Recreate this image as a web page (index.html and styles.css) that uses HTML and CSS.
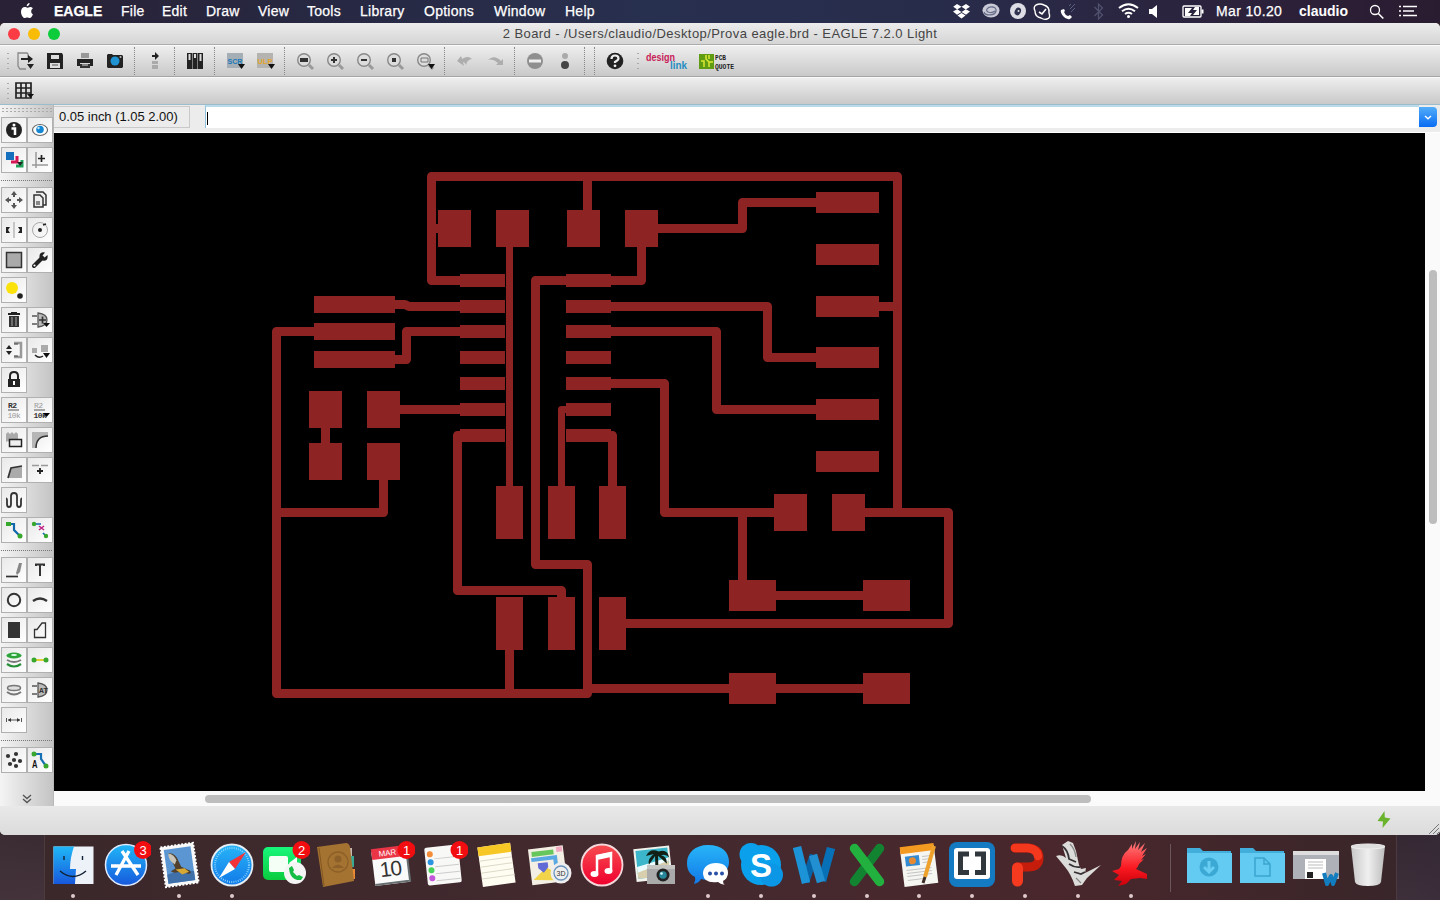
FILE: index.html
```html
<!DOCTYPE html>
<html lang="en">
<head>
<meta charset="utf-8">
<title>2 Board - EAGLE 7.2.0 Light</title>
<link rel="stylesheet" href="styles.css">
</head>
<body>
<div class="desktop">
<header class="menubar">
  <nav class="menus">
    <span class="apple"><svg width="16" height="18" viewBox="0 0 16 18"><path fill="#fff" d="M10.600 1c.1 1.900-1.300 3.300-2.900 3.300C7.500 2.700 9 1.200 10.600 1zM13.900 12.400c-.8 1.900-1.900 3.600-3.200 3.600-1 0-1.300-.6-2.500-.6s-1.600.6-2.500.6C3.900 16 2 12.700 2 9.700c0-3 1.800-4.700 3.700-4.700 1.100 0 1.900.7 2.600.7.700 0 1.600-.8 3-.8 1.100 0 2 .6 2.600 1.400-2.400 1.500-2 5.100 0 6.100z"/></svg></span>
    <b>EAGLE</b><span>File</span><span>Edit</span><span>Draw</span><span>View</span><span>Tools</span><span>Library</span><span>Options</span><span>Window</span><span>Help</span>
  </nav>
  <svg class="tray" width="270" height="23" viewBox="940 0 270 23">
    <g fill="#fff"><path d="M957 4l4.500 2.800-4.300 2.700-4-2.700zM966 4l4 2.800-4.300 2.700-4.200-2.700zM953 11.500l4.200-2.300 4.300 2.900-4.500 2.700zM970 11.500l-4.200-2.300-4.300 2.900 4.500 2.700zM957.500 15.500l4-2.500 4 2.500-4 3z"/></g>
    <ellipse cx="991" cy="10.500" rx="8.500" ry="7" fill="#c9cad6"/><path d="M984 12c1 4 11 4 12-1s-7-5-9-2 4 5 8 2" fill="none" stroke="#6a6f8c" stroke-width="1.300"/>
    <circle cx="1018" cy="11" r="8" fill="#dcdde5"/><ellipse cx="1018" cy="11.500" rx="3" ry="4" fill="#30334f" transform="rotate(25 1018 11)"/><circle cx="1018.500" cy="11" r="1" fill="#ddd"/>
    <path d="M1036 5q4-2 8 0 6 2 5 8 2 5-2 6-3 1-6-1-6-1-6-7-2-4 1-6z" fill="none" stroke="#fff" stroke-width="1.400"/><path d="M1039 12l3 2 4-5" fill="none" stroke="#fff" stroke-width="1.600"/>
    <path d="M1061 10l3-1 1 2-1 1q1 3 4 4l2-1 2 2-2 2q-4 1-7-3t-2-6z" fill="#fff"/><path d="M1070 9l5-5m0 4l-4 4m-2-6l2-2" stroke="#596080" stroke-width="1"/>
    <path d="M1094.500 7l8 8-4 4V4l4 4-8 8" fill="none" stroke="#50516c" stroke-width="1.300"/>
    <g fill="none" stroke="#fff" stroke-width="2"><path d="M1119 8q9.500-7.500 19 0M1122 11.200q6.500-5 13 0M1125 14q3.500-2.500 7 0"/></g><circle cx="1128.500" cy="16.500" r="1.500" fill="#fff"/>
    <path d="M1149 9h3l5-4v13l-5-4h-3z" fill="#fff"/>
    <rect x="1183" y="6" width="18" height="11" rx="1" fill="none" stroke="#fff" stroke-width="1.300"/><path d="M1202.500 9.500v4" stroke="#fff" stroke-width="2"/><path d="M1185 8h7l-4 5h4l-2 3h-5zM1199 15h-6l4-5h-4l2-3h4z" fill="#fff"/>
  </svg>
  <span class="clock">Mar 10.20</span><b class="user">claudio</b>
  <svg class="tray-end" width="55" height="23" viewBox="1365 0 55 23" fill="none" stroke="#fff"><circle cx="1375" cy="10" r="4.500" stroke-width="1.300"/><path d="M1378.300 13.500l5 5" stroke-width="1.600"/><path d="M1403 6.500h14M1403 11h11M1403 15.500h14M1399 6.500h2M1399 11h2M1399 15.500h2" stroke-width="1.700"/></svg>
</header>

<main class="window">
  <div class="titlebar">
    <div class="lights"><i class="red"></i><i class="amber"></i><i class="green"></i></div>
    <h1>2 Board - /Users/claudio/Desktop/Prova eagle.brd - EAGLE 7.2.0 Light</h1>
  </div>

  <div class="toolbar main-tools">
    <i class="grip"></i>
    <svg class="tool first" viewBox="-13 -15 28 30"><path d="M3-2v-5l-1-1h-9v13l2 3h6" fill="none" stroke="#888" stroke-width="1.300"/><path d="M-4-2h8" stroke="#222" stroke-width="2"/><path d="M3-6l5 4-5 4zM2 3h7l-3.500 5z" fill="#222"/></svg>
    <svg class="tool" viewBox="-15 -15 30 30"><path d="M-8-8H7l1 2V8H-8z" fill="#222"/><path d="M-4-6h8v4h-8zM-5 2H5v5H-5z" fill="#dcdcdc"/><path d="M-3 4h6" stroke="#555"/></svg>
    <svg class="tool" viewBox="-15 -15 30 30"><path d="M-4-8h8v5h-8z" fill="#999"/><path d="M-8-2H8v7H5V2H-5v3h-3z" fill="#222"/><path d="M-5 3H5v4H-5z" fill="#333"/><path d="M-3 4h6" stroke="#ddd"/></svg>
    <svg class="tool" viewBox="-15 -15 30 30"><path d="M-7-7h4l1 1h9l1 1V6L7 7H-7L-8 6V-6z" fill="#222"/><circle r="4.500" fill="#1f93d2"/><circle cx="5.500" cy="-4" r="1" fill="#bbb"/></svg>
    <i class="sep"></i>
    <svg class="tool" viewBox="-15 -15 30 30"><path d="M-3-6h3v-3l4 4-4 4v-3h-3z" fill="#222"/><path d="M-3 0h6v3h-6zM-3 4h6v4h-6z" fill="#aaa"/></svg>
    <i class="sep"></i>
    <svg class="tool" viewBox="-15 -15 30 30"><path d="M-8-8h5V8h-5zM-2.500-8h5V8h-5zM3-8h5V8H3z" fill="#222"/><path d="M-6.500-7h2v6h-2zM-1-7h2v4h-2zM4.500-7h2v7h-2z" fill="#ddd"/></svg>
    <i class="sep"></i>
    <svg class="tool" viewBox="-15 -15 30 30"><path d="M-8-8H8V7H-8z" fill="#a5aeb5"/><text x="-7.500" y="3" textLength="15" lengthAdjust="spacingAndGlyphs" class="tiny" fill="#1a78b8">SCR</text><path d="M3 3h7L6.500 8z" fill="#111"/></svg>
    <svg class="tool" viewBox="-15 -15 30 30"><path d="M-8-8H8V7H-8z" fill="#b5b3af"/><text x="-7.500" y="3" textLength="15" lengthAdjust="spacingAndGlyphs" class="tiny" fill="#e3a526">ULP</text><path d="M3 3h7L6.500 8z" fill="#111"/></svg>
    <i class="sep"></i>
    <svg class="tool" viewBox="-15 -15 30 30"><circle cx="-1" cy="-1" r="6.300" class="lens"/><path d="M4 4l4 4" class="handle"/><path d="M-5-3h8v4h-8z" fill="#333"/></svg>
    <svg class="tool" viewBox="-15 -15 30 30"><circle cx="-1" cy="-1" r="6.300" class="lens"/><path d="M4 4l4 4" class="handle"/><path d="M-4-1h6M-1-4v6" stroke="#333" stroke-width="2"/></svg>
    <svg class="tool" viewBox="-15 -15 30 30"><circle cx="-1" cy="-1" r="6.300" class="lens"/><path d="M4 4l4 4" class="handle"/><path d="M-4-1h6" stroke="#333" stroke-width="2"/></svg>
    <svg class="tool" viewBox="-15 -15 30 30"><circle cx="-1" cy="-1" r="6.300" class="lens"/><path d="M4 4l4 4" class="handle"/><path d="M-3-3h4v4h-4z" fill="#333"/></svg>
    <svg class="tool" viewBox="-15 -15 30 30"><circle cx="-1" cy="-1" r="6.300" class="lens"/><path d="M4 4l4 4" class="handle"/><path d="M-4-3h7v4h-7z" fill="none" stroke="#777"/><path d="M3 3h7L6.500 8z" fill="#111"/></svg>
    <i class="sep"></i>
    <svg class="tool" viewBox="-15 -15 30 30"><path d="M-8 0l4-5 1 3Q3-6 7-2 4-2 2 1L1 4Q0 1-2 1l1 4z" fill="#adadad"/></svg>
    <svg class="tool" viewBox="-15 -15 30 30"><path d="M8 4V-2L6 0Q-1-7-7-1-2-3 3 2L1 4z" fill="#adadad"/></svg>
    <i class="sep"></i>
    <svg class="tool" viewBox="-15 -15 30 30"><circle r="8" fill="#8f8f8f"/><path d="M-6-1.500H6v3H-6z" fill="#eee"/></svg>
    <svg class="tool" viewBox="-15 -15 30 30"><circle cy="-5" r="3" fill="#aaa"/><circle cy="4" r="4" fill="#444"/></svg>
    <i class="sep"></i><i class="sep"></i>
    <svg class="tool" viewBox="-15 -15 30 30"><circle r="8.300" fill="#222"/><path d="M-3.500-2q0-3.500 3.500-3.500T3.500-2.500Q3.500-1 0 1v1" fill="none" stroke="#eee" stroke-width="2.200"/><circle cy="4.800" r="1.400" fill="#eee"/></svg>
    <i class="grip"></i>
    <svg class="brand" width="52" height="30" viewBox="642 46 52 30"><text x="646" y="61" textLength="29" lengthAdjust="spacingAndGlyphs" class="dl" fill="#c92058">design</text><text x="670" y="69" textLength="17" lengthAdjust="spacingAndGlyphs" class="dl" fill="#268cc1">link</text></svg>
    <svg class="brand" width="46" height="30" viewBox="694 46 46 30"><path d="M699 54h15v15h-15z" fill="#5f9b13"/><path d="M701 61h3v6m2-12v4l3 3v5m0-12v4m0 3h4" stroke="#dce936" stroke-width="1.500" fill="none"/><text x="715" y="60" textLength="11" lengthAdjust="spacingAndGlyphs" class="pcb">PCB</text><text x="715" y="69" textLength="19" lengthAdjust="spacingAndGlyphs" class="pcb">QUOTE</text></svg>
  </div>

  <div class="toolbar grid-tools">
    <i class="grip"></i>
    <svg class="tool first" viewBox="-13 -14 28 28"><path d="M-9-8H6V7H-9zM-4-8V7M1-8V7M-9-3H6M-9 2H6" fill="none" stroke="#222" stroke-width="1.700"/><path d="M2 3h7L5.500 7z" fill="#111"/></svg>
  </div>

  <div class="work">
    <aside class="palette">
      <i class="dots"></i>
      <div class="row"><svg viewBox="0 0 24 24"><circle cx="12" cy="12" r="8" fill="#222"/><path d="M9.500 10.500H13V17" stroke="#fff" stroke-width="2.500" fill="none"/><circle cx="12" cy="7" r="1.500" fill="#fff"/></svg><svg viewBox="0 0 24 24"><ellipse cx="12" cy="12" rx="7.500" ry="5.500" fill="#fff" stroke="#666" stroke-width="1.200"/><circle cx="12" cy="11.500" r="3.800" fill="#1688d3"/><circle cx="10.500" cy="10" r="1.200" fill="#bce4fc"/></svg></div>
      <div class="row"><svg viewBox="0 0 24 24"><path d="M4 4h8v8H4z" fill="#1670bd"/><path d="M15 8v6H9" fill="none" stroke="#d71755" stroke-width="3"/><path d="M20 12v6h-6" fill="none" stroke="#20a15a" stroke-width="3"/><path d="M15 14h6l-3 4z" fill="#222"/></svg><svg viewBox="0 0 24 24"><path d="M8 4v16M4 17h16" stroke="#999" stroke-width="1.500"/><path d="M10 10.500h7M13.500 7v7" stroke="#222" stroke-width="1.700"/></svg></div>
      <i class="rule"></i>
      <div class="row"><svg viewBox="0 0 24 24"><path d="M12 3l3 4h-2v2h-2V7H9zM12 21l3-4h-2v-2h-2v2H9zM3 12l4-3v2h2v2H7v2zM21 12l-4-3v2h-2v2h2v2z" fill="#555"/></svg><svg viewBox="0 0 24 24"><path d="M8 4h7l3 3v10h-3M6 7h6l3 3v9H6z" fill="#eee" stroke="#333" stroke-width="1.500"/><path d="M8 13h4v4H8z" fill="#888"/></svg></div>
      <div class="row"><svg viewBox="0 0 24 24"><path d="M12 4v16" stroke="#999"/><path d="M4 9h4l-2 3 2 3H4zM20 9h-4l2 3-2 3h4z" fill="#222"/></svg><svg viewBox="0 0 24 24"><circle cx="12" cy="12" r="7.500" fill="none" stroke="#aaa"/><circle cx="12" cy="12" r="2" fill="#222"/><path d="M15 7l3-1" stroke="#222" stroke-width="1.500"/></svg></div>
      <div class="row"><svg viewBox="0 0 24 24"><path d="M4.500 4.500h15v15h-15z" fill="#aaa" stroke="#333" stroke-width="1.500"/></svg><svg viewBox="0 0 24 24"><path d="M6 18l8-8" stroke="#222" stroke-width="4" stroke-linecap="round"/><path d="M19.500 7l-3 2.500-2-2L17 4.500q-6-1-5.500 5l3 3q6 1 5-5.500z" fill="#222"/><circle cx="6.500" cy="17.500" r="1.100" fill="#fff"/></svg></div>
      <div class="row"><svg viewBox="0 0 24 24"><circle cx="10" cy="10" r="6" fill="#fbe20b"/><circle cx="18" cy="18" r="2.800" fill="#222"/></svg></div>
      <div class="row"><svg viewBox="0 0 24 24"><path d="M6 6h12M9 5h6" stroke="#222" stroke-width="2"/><path d="M7 8h10v11H7z" fill="#333"/><path d="M10 9v9m4-9v9" stroke="#aaa"/></svg><svg viewBox="0 0 24 24"><path d="M4 8h5m-5 8h5M10 5q9 1 9 7t-9 7z" fill="#bbb" stroke="#555" stroke-width="1.300"/><path d="M11 12h7m-3.500-3.500v7" stroke="#333" stroke-width="1.700"/><path d="M15 15h7l-3.500 4z" fill="#111"/></svg></div>
      <div class="row"><svg viewBox="0 0 24 24"><path d="M4 11l3-4 3 4zM4 13l3 4 3-4z" fill="#222"/><path d="M12 5h7v14h-7" fill="none" stroke="#999" stroke-width="2.500"/><path d="M12 6h4m-4 12h4" stroke="#444"/></svg><svg viewBox="0 0 24 24"><path d="M4 10h5v5H4zM13 7h7v7h-7z" fill="#aaa"/><path d="M7 17q4 4 8 1" stroke="#222" fill="none" stroke-width="1.500"/><path d="M15 15h7l-3.500 5z" fill="#111"/></svg></div>
      <div class="row"><svg viewBox="0 0 24 24"><path d="M6 11h12v8H6z" fill="#222"/><path d="M8 12V8q0-4 4-4t4 4v4" fill="none" stroke="#222" stroke-width="2"/><path d="M12 13v4" stroke="#fff" stroke-width="2"/></svg></div>
      <div class="row"><svg viewBox="0 0 24 24"><text x="6" y="9.500" class="nano">R2</text><path d="M6 12h11" stroke="#555"/><text x="5.500" y="19.500" class="nano pale">10k</text></svg><svg viewBox="0 0 24 24"><text x="6" y="9.500" class="nano pale">R2</text><path d="M6 12h11" stroke="#555"/><text x="5.500" y="19.500" class="nano">10k</text><path d="M15 15h7l-3.500 4z"/></svg></div>
      <div class="row"><svg viewBox="0 0 24 24"><path d="M4 6l2-2 2 2 2-2 2 2 2-2 2 2v8l-2-1-2 2-2-2-2 2-2-2-2 1z" fill="#aaa"/><path d="M7.500 11.500h12v7h-12z" fill="#eee" stroke="#222" stroke-width="1.500"/></svg><svg viewBox="0 0 24 24"><path d="M4 4h16v4Q8 8 8 20H4z" fill="#b6b6b6"/><path d="M8 20q0-12 12-12" fill="none" stroke="#333" stroke-width="1.500"/></svg></div>
      <div class="row"><svg viewBox="0 0 24 24"><path d="M9 10l11-2v12H6z" fill="#aaa"/><path d="M6 20L9 10l11-2" fill="none" stroke="#333" stroke-width="1.700"/></svg><svg viewBox="0 0 24 24"><path d="M4 7.500h7m2 0h7" stroke="#999" stroke-width="1.300"/><path d="M9 13h6m-3-3v6" stroke="#222" stroke-width="1.800"/></svg></div>
      <div class="row"><svg viewBox="0 0 24 24"><path d="M4 10.500q1 0 1 2v3.500q0 3 2 3t2-3V8q0-3 3-3t3 3v8q0 3 2 3t2-3v-3.500q0-2 1-2" fill="none" stroke="#333" stroke-width="1.800"/></svg></div>
      <div class="row"><svg viewBox="0 0 24 24"><path d="M6 6h6v6l6 6" fill="none" stroke="#1268aa" stroke-width="2.200"/><path d="M4 4h5v4H4z" fill="#37a72e"/><circle cx="18" cy="18" r="2.500" fill="#37a72e"/></svg><svg viewBox="0 0 24 24"><path d="M6 6h7M15 15l3 3" stroke="#1268aa" stroke-width="1.700"/><path d="M11 8l5 4m0-4l-5 4" stroke="#c02585" stroke-width="1.500"/><circle cx="6" cy="6" r="2.200" fill="#37a72e"/><circle cx="18" cy="18" r="2.200" fill="#37a72e"/></svg></div>
      <i class="rule"></i>
      <div class="row"><svg viewBox="0 0 24 24"><path d="M4 18.500h12" stroke="#333" stroke-width="1.700"/><path d="M17 5h3l-2 9-3 3-1-2z" fill="#888"/></svg><svg viewBox="0 0 24 24"><path d="M8 8V6.500h8V8M12 6.500V18" stroke="#333" stroke-width="2" fill="none"/></svg></div>
      <div class="row"><svg viewBox="0 0 24 24"><circle cx="12" cy="12" r="6.200" fill="none" stroke="#333" stroke-width="2"/></svg><svg viewBox="0 0 24 24"><path d="M5 13q7-5 14 0" fill="none" stroke="#333" stroke-width="2.300"/></svg></div>
      <div class="row"><svg viewBox="0 0 24 24"><path d="M6 4h12v16H6z" fill="#333"/></svg><svg viewBox="0 0 24 24"><path d="M6.500 19.500v-8h2.500l5-6.500h3.500v14.500z" fill="none" stroke="#333" stroke-width="1.300"/></svg></div>
      <div class="row"><svg viewBox="0 0 24 24"><path d="M5 16q7 5 14 0" fill="none" stroke="#278f38" stroke-width="2.200"/><path d="M5 12q7 4 14 0" fill="none" stroke="#777" stroke-width="2"/><ellipse cx="12" cy="7.500" rx="7.500" ry="3" fill="#2ca43a"/><ellipse cx="12" cy="7" rx="3" ry="1" fill="#dfe"/></svg><svg viewBox="0 0 24 24"><path d="M6 12h12" stroke="#e1cf36" stroke-width="2"/><circle cx="6" cy="12" r="2.500" fill="#37a72e"/><circle cx="18" cy="12" r="2.500" fill="#37a72e"/></svg></div>
      <div class="row"><svg viewBox="0 0 24 24"><ellipse cx="12" cy="10" rx="6.500" ry="2.500" fill="#ddd" stroke="#777" stroke-width="1.500"/><path d="M5 14q7 5 14 0" fill="none" stroke="#777" stroke-width="2"/></svg><svg viewBox="0 0 24 24"><path d="M4 8h5m-5 8h5M10 5q9 1 9 7t-9 7z" fill="#bbb" stroke="#555" stroke-width="1.300"/><text x="11" y="15" class="nano">AT</text></svg></div>
      <div class="row"><svg viewBox="0 0 24 24"><path d="M4.500 10v4m15-4v4M6 12h12" stroke="#555"/><path d="M6 12l3-2v4zM18 12l-3-2v4z" fill="#333"/></svg></div>
      <i class="rule"></i>
      <div class="row"><svg viewBox="0 0 24 24" fill="#333"><circle cx="12" cy="12" r="2.100"/><circle cx="6" cy="8" r="2.100"/><circle cx="14" cy="6" r="2.100"/><circle cx="18" cy="13" r="2.100"/><circle cx="8" cy="16" r="2.100"/><circle cx="14" cy="18" r="2.100"/></svg><svg viewBox="0 0 24 24"><path d="M6 6h7v5l5 7" fill="none" stroke="#1670b4" stroke-width="2.200"/><circle cx="6" cy="6" r="2.500" fill="#37a72e"/><circle cx="18" cy="18" r="2.500" fill="#37a72e"/><text x="4" y="20" textLength="5.500" lengthAdjust="spacingAndGlyphs" class="auto">A</text></svg></div>
      <svg class="more" width="10" height="12" viewBox="0 0 10 12"><path d="M1 1l4 3.500L9 1M1 5l4 3.500L9 5" fill="none" stroke="#555" stroke-width="1.400"/></svg>
    </aside>

    <section class="editor">
      <div class="command">
        <span class="coords">0.05 inch (1.05 2.00)</span>
        <div class="input"><i class="caret"></i></div>
        <div class="dropdown"><svg width="8" height="5" viewBox="0 0 8 5"><path d="M1 1l3 2.700L7 1" fill="none" stroke="#fff" stroke-width="1.400"/></svg></div>
      </div>
      <div class="view">
        <svg class="board" viewBox="54 133 1371 658">
          <g class="trace">
            <path d="M460 280.500H431.500V176.500H897.500V512.500M431.500 228.500H440M587.500 176.500V212"/>
            <path d="M656 228.500H742.500V202.500H818M877 306.500H897.500"/>
            <path d="M393 304.500H405L409 306.500H462M393 359.500H406.500V331.500H462M398 409.500H462"/>
            <path d="M316 331.500H276.500V693.500H587.500V564.500H535.500V280.500H641.500V245M383.500 478V512.500H276.500M325.500 426V445"/>
            <path d="M462 435.500H457.500V590.500H561.500V600M609 435.500H612.500V488M509.500 648V693"/>
            <path d="M609 306.500H767.500V357.500H818M609 331.500H716.500V409.500H818M609 383.500H664.500V512.500H776M742.500 512.500V582"/>
            <path d="M863 512.500H948.500V623.500H624M774 595.500H865M590 688.500H865"/>
          </g>
          <path class="trace thin" d="M509.500 245V488M568 409.500H561.500V488"/>
          <g class="pads">
            <path d="M438 210h33v37h-33zM496 210h33v37h-33zM567 210h33v37h-33zM625 210h33v37h-33z"/>
            <path d="M460 274h45v13h-45zM460 300h45v13h-45zM460 325h45v13h-45zM460 351h45v13h-45zM460 377h45v13h-45zM460 403h45v13h-45zM460 429h45v13h-45z"/>
            <path d="M566 274h45v13h-45zM566 300h45v13h-45zM566 325h45v13h-45zM566 351h45v13h-45zM566 377h45v13h-45zM566 403h45v13h-45zM566 429h45v13h-45z"/>
            <path d="M314 296h81v17h-81zM314 323h81v17h-81zM314 351h81v17h-81z"/>
            <path d="M309 391h33v37h-33zM367 391h33v37h-33zM309 443h33v37h-33zM367 443h33v37h-33zM774 494h33v37h-33zM832 494h33v37h-33z"/>
            <path d="M496 486h27v53h-27zM548 486h27v53h-27zM599 486h27v53h-27zM496 597h27v53h-27zM548 597h27v53h-27zM599 597h27v53h-27z"/>
            <path d="M816 192h63v21h-63zM816 244h63v21h-63zM816 296h63v21h-63zM816 347h63v21h-63zM816 399h63v21h-63zM816 451h63v21h-63z"/>
            <path d="M729 580h47v31h-47zM863 580h47v31h-47zM729 673h47v31h-47zM863 673h47v31h-47z"/>
          </g>
        </svg>
        <div class="vscroll"><i></i></div>
      </div>
      <div class="hscroll"><i></i></div>
    </section>
  </div>
  <footer class="status">
    <svg width="14" height="17" viewBox="0 0 14 17"><path d="M7.500 0L.5 10l5.500.5-.5 6.500L13.500 7.500 7.800 6.500z" fill="#69b32d"/></svg>
    <svg width="12" height="12" viewBox="0 0 12 12"><path d="M1 11L11 1M5 11l6-6M9 11l2-2" stroke="#777"/></svg>
  </footer>
</main>

<div class="shelf">
 <svg width="0" height="0" class="defs"><defs>
  <linearGradient id="blue" x2="0" y2="1"><stop stop-color="#20b8f8"/><stop offset="1" stop-color="#1758dc"/></linearGradient>
  <linearGradient id="sky" x2="0" y2="1"><stop stop-color="#28b5f8"/><stop offset="1" stop-color="#1179e8"/></linearGradient>
  <linearGradient id="lime" x2="0" y2="1"><stop stop-color="#17f77b"/><stop offset="1" stop-color="#0bcb3f"/></linearGradient>
  <linearGradient id="rose" x2="0" y2="1"><stop stop-color="#f64d50"/><stop offset="1" stop-color="#f0002e"/></linearGradient>
  <linearGradient id="bird" x2="0" y2="1"><stop stop-color="#ff8080"/><stop offset=".6" stop-color="#fa1820"/><stop offset="1" stop-color="#c9000a"/></linearGradient>
  <linearGradient id="bin" x2="1" y2="0"><stop stop-color="#c8c8c8"/><stop offset=".5" stop-color="#efefef"/><stop offset="1" stop-color="#bdbdbd"/></linearGradient>
 </defs></svg>
 <div class="dock">
  <svg class="app" viewBox="-25 -30 50 65"><path d="M-19.500-18.500h40v37.500h-40z" fill="#edf2f8"/><path d="M-19.500-18.500H1Q-3-7-3 4H3l-1 15h-21.500z" fill="url(#blue)"/><path d="M-9-9v4M9.500-9v4M-13 6Q0 17 13 6" stroke="#102135" stroke-width="1.400" fill="none"/><circle class="run" cy="31" r="2"/></svg>
  <svg class="app" viewBox="-25 -30 50 65"><circle r="20.500" fill="url(#blue)" stroke="#dfeaff" stroke-width="1.500"/><path d="M3-14l-13 24M-4-14L12 10M-15 1h30" stroke="#fff" stroke-width="3.300"/><circle cx="17" cy="-15" r="9" class="badge"/><text x="17" y="-10.500" class="num">3</text></svg>
  <svg class="app" viewBox="-25 -30 50 65"><g transform="rotate(-8)"><path d="M-16-20h33v40h-33z" fill="#f8f8f8" stroke="#fff" stroke-width="2" stroke-dasharray="2 1.500"/><path d="M-13-17h27v34h-27z" fill="#5b96d3"/><path d="M-13 8q14-4 27 0v9h-27z" fill="#3f70aa"/><path d="M-9-13q7 0 9 9l2 6 8 5q2 4-2 3L1 7l-7 0-3-2 5-2z" fill="#51412d"/><path d="M-9-13q6 2 7 8l-2 4q-6-5-5-12z" fill="#c9c4b8"/><path d="M-4 4l9 0 4 4-7 2z" fill="#d7a834"/></g><circle class="run" cy="31" r="2"/></svg>
  <svg class="app" viewBox="-25 -30 50 65"><circle r="20.500" fill="url(#sky)" stroke="#e6edf3" stroke-width="1.800"/><circle r="17" fill="none" stroke="#9adbff" stroke-width="2" stroke-dasharray=".8 1.400"/><path d="M14-13L3 4-3-3z" fill="#f23439"/><path d="M-13 13L3 4-3-3z" fill="#fff"/><circle class="run" cy="31" r="2"/></svg>
  <svg class="app" viewBox="-25 -30 50 65"><rect x="-22" y="-18" width="38" height="33" rx="5" fill="url(#lime)"/><rect x="-16" y="-9" width="19" height="16" rx="2" fill="#f4fff5"/><path d="M4-2l8-6V6z" fill="#fff"/><circle cx="10" cy="8" r="11" fill="#f5f5f5"/><path d="M4 3l3-2 2 4-1 2 4 4 2-1 4 2-2 3q-11 1-12-12z" fill="#15bd45"/><circle cx="16.500" cy="-15" r="9" class="badge"/><text x="16.500" y="-10.500" class="num">2</text></svg>
  <svg class="app" viewBox="-25 -30 50 65"><path d="M10-17h5V13h-5z" fill="#c6bab0"/><path d="M14-9h3v11h-3z" fill="#37a994"/><path d="M14 4h4v10h-4z" fill="#eb8b33"/><path d="M-20-18L9-22q3 0 4 4l4 34-31 6z" fill="#a47231"/><path d="M-18-17l5 38" stroke="#83571f"/><circle cx="1" cy="-3" r="10" fill="none" stroke="#8c6028" stroke-width="1.300"/><circle cx="1" cy="-6" r="3.500" fill="#8c6028"/><path d="M-5 3Q1-4 7 3z" fill="#8c6028"/></svg>
  <svg class="app" viewBox="-25 -30 50 65"><g transform="rotate(-7)"><path d="M-17-15h35v34h-35z" fill="#fafafa"/><path d="M-17-18h35v11h-35z" fill="#ea3546"/><path d="M-17 18h36M18-14v33" stroke="#666e70" stroke-width="2"/><text x="-10" y="-9.500" class="month">MAR</text><text x="0" y="11" class="day">10</text></g><circle cx="16.500" cy="-15" r="9" class="badge"/><text x="16.500" y="-10.500" class="num">1</text></svg>
  <svg class="app" viewBox="-25 -30 50 65"><g transform="rotate(-6)"><rect x="-17" y="-19" width="34" height="38" rx="2" fill="#f8f8f7"/><path d="M-8-7h24M-8 1h24M-8 8h24M-8 15h24" stroke="#ccc"/><circle cx="-12" cy="-12" r="3" fill="#f58c37"/><circle cx="-12" cy="-4" r="3" fill="#2b94e0"/><circle cx="-12" cy="4" r="3" fill="#48d25a"/><circle cx="-12" cy="12" r="3" fill="#c456d9"/></g><circle cx="16.500" cy="-15" r="9" class="badge"/><text x="16.500" y="-10.500" class="num">1</text></svg>
  <svg class="app" viewBox="-25 -30 50 65"><g transform="rotate(-8)"><path d="M-16-20h33v40h-33z" fill="#fffdf2"/><path d="M-16-20h33v9h-33z" fill="#f6c725"/><path d="M-16-6h33M-16 0h33M-16 6h33M-16 12h33" stroke="#ddd9c8"/></g></svg>
  <svg class="app" viewBox="-25 -30 50 65"><g transform="rotate(-7)"><path d="M-19-18h35v36h-35z" fill="#f3efe4"/><path d="M-16-15H6v5h-22z" fill="#68c75c"/><path d="M9-17h6v5H9z" fill="#f0a9c0"/><path d="M-17-7H7v22" fill="none" stroke="#5aa9e2" stroke-width="4"/><path d="M-17 13L-3 2l8 6v8z" fill="#f1d449"/><path d="M-11-3H-1v5l-5 5-5-5z" fill="#626bd5"/></g><circle cx="12" cy="8" r="10.500" fill="#eee"/><circle cx="12" cy="8" r="7" fill="none" stroke="#6a93bd" stroke-width="1.300"/><text x="12" y="10.500" class="three">3D</text></svg>
  <svg class="app" viewBox="-25 -30 50 65"><circle r="20.500" fill="url(#rose)" stroke="#f4d9dc" stroke-width="1.800"/><path d="M-5 8v-17l14-3V6" fill="none" stroke="#fff" stroke-width="2.500"/><path d="M-5-10l14-3v5L-5-5z" fill="#fff"/><ellipse cx="-7.500" cy="9" rx="4" ry="3" fill="#fff"/><ellipse cx="6.500" cy="6" rx="4" ry="3" fill="#fff"/></svg>
  <svg class="app" viewBox="-25 -30 50 65"><g transform="rotate(-6)"><path d="M-20-18h36v33h-36z" fill="#f2f3ec"/><path d="M-18-16h32v28h-32z" fill="#3cb6ca"/><path d="M-18 1l32-7v18h-32z" fill="#d8cfae"/><path d="M-18 0l32-6v3L-18 6z" fill="#eafcff"/><path d="M5-13q-8-5-13 3l8-1q-7 4-6 10l7-8-1 13h3l1-13 8 9q1-7-5-9 5-1 8 3-1-9-10-7z" fill="#121f15"/></g><path d="M-8 0H20v19H-8z" fill="#aaa"/><path d="M-8 0H20v4H-8z" fill="#c4c4c2"/><circle cx="8" cy="10" r="6.500" fill="#222"/><circle cx="8" cy="10" r="3.800" fill="#268798"/><circle cx="6.500" cy="8.500" r="1.300" fill="#d7ffff"/></svg>
  <svg class="app" viewBox="-25 -30 50 65"><path d="M0-20c14 0 21 7 21 17S11 15 0 15q-4 0-7-1-2 4-7 5 2-4 1-7c-6-3-8-8-8-14 0-10 8-18 21-18z" fill="url(#sky)"/><path d="M8-2c8 0 12 4 12 10q0 5-5 8 0 3 2 4-5-1-7-3-14 2-15-8C-5 2 0-2 8-2z" fill="#fff"/><g fill="#2850a6"><circle cx="2" cy="8.500" r="2"/><circle cx="8" cy="8.500" r="2"/><circle cx="14" cy="8.500" r="2"/></g><circle class="run" cy="31" r="2"/></svg>
  <svg class="app" viewBox="-25 -30 50 65"><circle r="20" fill="#0ba0eb"/><circle cx="-10" cy="-10.500" r="11.500" fill="#0ba0eb"/><circle cx="10.500" cy="10" r="11.500" fill="#0b97e5"/><text y="11.500" class="skype">S</text><circle class="run" cy="31" r="2"/></svg>
  <svg class="app" viewBox="-25 -30 50 65"><g fill="none" stroke-width="8.500" stroke-linejoin="round"><path d="M8 16l9-33" stroke="#0870b7"/><path d="M-9 17L0-10" stroke="#0764a7"/><path d="M-1-10l8 27" stroke="#218fd0"/><path d="M-17-18l9 36" stroke="#1c93d7"/></g><circle class="run" cy="31" r="2"/></svg>
  <svg class="app" viewBox="-25 -30 50 65"><path d="M12.500-16.500L-12.500 16.500" stroke="#118331" stroke-width="9.500" stroke-linecap="round"/><path d="M-12.500-16.500L12.500 16.500" stroke="#22b13f" stroke-width="9.500" stroke-linecap="round"/><circle class="run" cy="31" r="2"/></svg>
  <svg class="app" viewBox="-25 -30 50 65"><g transform="rotate(-7)"><path d="M-17-18h34v38h-34z" fill="#f5f5f2"/><path d="M-17-20h34v7h-34z" fill="#f59a20"/><path d="M-13-10H1v10h-14z" fill="#328bd2"/><circle cx="-6" cy="-5" r="3.500" fill="#e68b34"/><path d="M4-8h9M4-5h9M4-2h9M-13 4h25M-13 7h25M-13 10h25M-13 14h18" stroke="#c4c4c4"/></g><path d="M15-19L6 12" stroke="#eea22b" stroke-width="4"/><path d="M6 12L4 18" stroke="#3c2c25" stroke-width="3"/><circle class="run" cy="31" r="2"/></svg>
  <svg class="app" viewBox="-25 -30 50 65"><rect x="-23" y="-23" width="46" height="45" rx="8" fill="#147ac2"/><rect x="-18" y="-17" width="36" height="31" rx="3" fill="#fff"/><path d="M-3-11h-8.500V7.500h8.500M3-11h8.500V7.500H3" fill="none" stroke="#30383d" stroke-width="5"/><circle class="run" cy="31" r="2"/></svg>
  <svg class="app" viewBox="-25 -30 50 65"><path d="M-10-17H3Q14-16 14-7T3 2H-8" fill="none" stroke="#c61c0b" stroke-width="9" stroke-linecap="round"/><path d="M-10-17H3q9 1 10 8" fill="none" stroke="#f4381e" stroke-width="8.500" stroke-linecap="round"/><path d="M-7.500 3v13" stroke="#f53a20" stroke-width="11" stroke-linecap="round"/><circle class="run" cy="31" r="2"/></svg>
  <svg class="app" viewBox="-25 -30 50 65"><path d="M-22-9q6-2 10 2l-4-13 6-4 5 2 3 8 3 14 2 4 5-1-1 5 16-8L9 13 4 20l-7 1q-4-12-10-19-4-5-9-11z" fill="#dcdcda"/><path d="M-16-19q6 4 7 13l7 3M-9-1q6 4 11 3M-4 7l7 2 4-2" fill="none" stroke="#353034" stroke-width="1.800"/><path d="M-8-21q5 5 6 13M-2 13l5 5" fill="none" stroke="#888" stroke-width="1.300"/><circle class="run" cy="31" r="2"/></svg>
  <svg class="app" viewBox="-25 -30 50 65"><path d="M-10 1q0-11 7-16l4-6v5l4-8-1 8 5-7-2 8 7-7-4 9 6-4-5 8 4-2-5 6 3-1-5 5q-1 3-3 5l11 5 0 5-7-1-9 1-5 5-8 2 4-5-8-1 5-5-7-4 7-2z" fill="url(#bird)"/><circle class="run" cy="31" r="2"/></svg>
  <i class="divider"></i>
  <svg class="app" viewBox="-25 -30 50 65"><path d="M-22-17h13l3 3h28v32h-44z" fill="#42aedc"/><path d="M-22-12h45v30h-45z" fill="#63caf2"/><circle cy="2" r="9.500" fill="#3ca9d5"/><path d="M0-4V7M-5 2l5 5 5-5" fill="none" stroke="#68cef4" stroke-width="3"/></svg>
  <svg class="app" viewBox="-25 -30 50 65"><path d="M-22-17h13l3 3h28v32h-44z" fill="#42aedc"/><path d="M-22-12h45v30h-45z" fill="#63caf2"/><path d="M-7-7H2l6 6v12H-7zM2-7v6h6" fill="none" stroke="#3ca5cf" stroke-width="1.500"/></svg>
  <svg class="app" viewBox="-25 -30 50 65"><path d="M-22-14h46v28h-46z" fill="#aeb1b7"/><path d="M-22-14h46v4h-46z" fill="#ddd"/><path d="M-10-6h21v20h-21z" fill="#fff"/><path d="M-7-3h15M-7 0h15M-7 3h15" stroke="#bbb"/><path d="M-8 7h6v6h-6z" fill="#222"/><path d="M9 8l3 11 4-8 2 8 4-11" fill="none" stroke="#117dbe" stroke-width="4" stroke-linejoin="round"/></svg>
  <svg class="app" viewBox="-25 -30 50 65"><path d="M-17-19l4 36q1 4 13 4t13-4l4-36z" fill="url(#bin)"/><ellipse cy="-18.500" rx="17" ry="2.500" fill="#dedede" stroke="#eee"/></svg>
 </div>
</div>
</div>
</body>
</html>
```
FILE: styles.css
```css
* { box-sizing: border-box; }
body { margin: 0; font-family: "Liberation Sans", Arial, sans-serif; }
svg { display: block; flex: none; }
.desktop { width: 1440px; height: 900px; overflow: hidden; display: flex; flex-direction: column; background: #33272d; }

.menubar { height: 23px; flex: none; display: flex; align-items: center; color: #fff; font-size: 14px; letter-spacing: .25px; white-space: nowrap; background: linear-gradient(90deg, #292135, #272842 22%, #28304f 45%, #282c4b 65%, #2c213a 88%, #2a1c30); }
.menus { display: grid; grid-template-columns: 54px 67px 41px 44px 52px 49px 53px 64px 70px 71px 375px; line-height: 22px; height: 23px; width: 940px; flex: none; }
.menus span, .menus b { -webkit-text-stroke: .25px #fff; }
.menus b { letter-spacing: 0; }
.apple { padding: 2px 0 0 19px; }
.clock { margin-left: 6px; width: 83px; line-height: 22px; height: 23px; letter-spacing: .35px; -webkit-text-stroke: .25px #fff; }
.user { width: 66px; line-height: 22px; height: 23px; letter-spacing: 0; }
.tray-end { margin-left: 0; }

.window { height: 812px; flex: none; display: flex; flex-direction: column; border-radius: 5px; overflow: hidden; background: #e5e5e5; }
.titlebar { height: 22px; flex: none; display: grid; grid-template-columns: 68px 1fr 68px; align-items: center; background: linear-gradient(#ececec, #d5d5d5); border-bottom: 1px solid #acacac; }
.lights { display: flex; gap: 8px; padding-left: 8px; }
.lights i { width: 12px; height: 12px; border-radius: 50%; }
.red { background: #fc3c44; } .amber { background: #f8bc05; } .green { background: #0ccc3c; }
.titlebar h1 { margin: 0; padding-top: 1px; font-weight: 400; font-size: 13px; letter-spacing: .43px; text-align: center; color: #444; line-height: 20px; }

.toolbar { flex: none; display: flex; align-items: center; background: linear-gradient(#eee, #c9c9c9); border-top: 1px solid #f9f9f9; border-bottom: 1px solid #a5a5a5; }
.main-tools { height: 32px; }
.grid-tools { height: 28px; border-bottom-color: #9dbccb; }
.grip { width: 12px; height: 20px; flex: none; background: radial-gradient(circle, #aaa 0 .8px, transparent 1px) 6px 0 / 4px 5px; background-clip: content-box; padding: 1px 1px 1px 7px; }
.tool { width: 30px; height: 30px; }
.tool.first { width: 28px; height: 30px; }
.grid-tools .tool.first { height: 28px; }
.sep { width: 10px; height: 28px; flex: none; display: flex; justify-content: center; }
.sep::before { content: ""; border-left: 1px dotted #888; margin-right: 1px; }
.lens { fill: #ddd; stroke: #888; stroke-width: 1.4; }
.handle { stroke: #999; stroke-width: 3; }
.tiny { font: bold 8px "Liberation Sans", sans-serif; }
.dl { font: bold 10px "Liberation Sans", sans-serif; }
.pcb { font: bold 7.5px "Liberation Mono", monospace; fill: #222; }

.work { display: flex; height: 701px; flex: none; }
.palette { width: 54px; flex: none; display: flex; flex-direction: column; gap: 4px; padding: 2px 1px 0; background: linear-gradient(90deg, #f4f4f4, #c4c4c4); border-right: 1px solid #b8b8b8; }
.dots { height: 6px; flex: none; background: radial-gradient(circle, #aaa 0 .6px, transparent .9px) 0 0 / 4px 3px; }
.row { display: flex; height: 26px; flex: none; }
.row svg { width: 26px; height: 26px; border: 1px solid #b0b0b0; background: linear-gradient(135deg, #e9e9e9, #fff); }
.rule { height: 6px; flex: none; display: flex; align-items: center; }
.rule::before { content: ""; width: 100%; border-top: 1px dotted #777; }
.nano { font: bold 8px "Liberation Mono", monospace; letter-spacing: -.6px; fill: #333; }
.pale { fill: #999; font-weight: normal; }
.auto { font: bold 10px "Liberation Sans", sans-serif; fill: #111; }
.more { margin: 17px 0 0 21px; }

.editor { width: 1386px; display: flex; flex-direction: column; }
.command { height: 28px; flex: none; display: flex; background: #ececec; border-bottom: 1px solid #fff; }
.coords { width: 136px; height: 22px; margin: 1px 15px 0 0; padding-left: 5px; border: 1px solid #c9c9c9; border-left: 0; font-size: 13px; line-height: 20px; letter-spacing: -.02px; color: #111; white-space: nowrap; }
.input { width: 1214px; height: 23px; background: #fff; border-top: 2px solid #b8dbea; border-left: 1px solid #8fc4dc; padding: 5px 0 0 1px; display: flex; }
.caret { width: 1px; height: 13px; background: #000; }
.dropdown { width: 18px; height: 20px; margin-top: 2px; border-radius: 0 4px 4px 0; background: linear-gradient(#53adf9, #096cf3); display: flex; align-items: center; justify-content: center; }
.view { height: 658px; flex: none; display: flex; }
.board { width: 1371px; height: 658px; background: #000; }
.trace { fill: none; stroke: #8d2323; stroke-width: 9; stroke-linejoin: round; }
.thin { stroke-width: 7; }
.pads { fill: #8d2323; shape-rendering: crispEdges; }
.vscroll { width: 15px; background: #fafafa; padding: 137px 3px 0 4px; display: flex; }
.vscroll i { width: 8px; height: 254px; border-radius: 4px; background: #bdbdbd; }
.hscroll { height: 15px; flex: none; background: #fafafa; padding: 4px 0 0 151px; }
.hscroll i { display: block; width: 886px; height: 8px; border-radius: 4px; background: #bdbdbd; }
.status { height: 29px; flex: none; display: flex; justify-content: flex-end; align-items: flex-end; background: linear-gradient(#e9e9e9, #dbdbdb); gap: 37px; }
.status svg:first-child { margin-bottom: 7px; }

.shelf { height: 65px; flex: none; background: linear-gradient(90deg, rgba(64,48,57,.7), transparent 20% 85%, rgba(55,43,57,.8)), linear-gradient(#302329, #4b383e); padding: 0 43px 0 44px; }
.defs { height: 0; }
.dock { height: 65px; display: flex; background: linear-gradient(90deg, #3b282b, #432a2f 45%, #49272c 75%, #39262a); border-left: 1px solid #4b3b3f; border-right: 1px solid #4b3b3f; padding-left: 1.5px; }
.app { width: 50px; height: 65px; margin: 0 1.46px; }
.divider { width: 1px; height: 48px; margin: 9px 11.5px 0 12.5px; background: #69575a; flex: none; }
.badge { fill: #f20d11; }
.num { font: 13px "Liberation Sans", sans-serif; fill: #fff; text-anchor: middle; }
.month { font: 8px "Liberation Sans", sans-serif; fill: #fff; }
.day { font: 21px "Liberation Sans", sans-serif; fill: #333; text-anchor: middle; letter-spacing: -1px; }
.three { font: 7px "Liberation Sans", sans-serif; fill: #333; text-anchor: middle; }
.skype { font: bold 33px "Liberation Sans", sans-serif; fill: #fff; text-anchor: middle; }
.run { fill: #e0c9cc; }
```
